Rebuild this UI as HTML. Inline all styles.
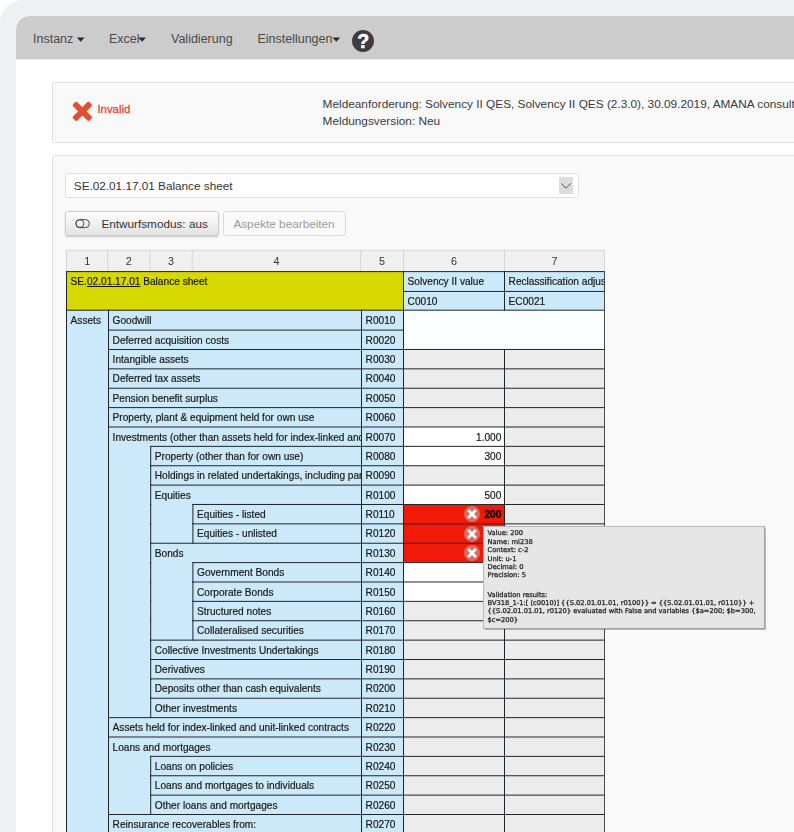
<!DOCTYPE html>
<html lang="de"><head><meta charset="utf-8"><title>Solvency II QES – Balance sheet</title>
<style>
html,body{margin:0;padding:0;}
body{width:794px;height:832px;overflow:hidden;background:#fff;position:relative;font-family:"Liberation Sans",Arial,sans-serif;color:#333;}
.frame{position:absolute;left:0;top:0;width:840px;height:880px;background:#eff0f2;border-top-left-radius:23px;}
.screen{position:absolute;left:16px;top:16px;width:820px;height:860px;background:#fff;border-top-left-radius:14px;overflow:hidden;}
.nav{position:absolute;left:0;top:0;width:820px;height:44px;background:linear-gradient(#cccccc 43px,#ebebeb 43px);}
.nav span{position:absolute;top:14.7px;font-size:12.5px;line-height:16px;color:#4a4a4a;white-space:nowrap;}
.caret{position:absolute;width:7.8px;height:4.3px;background:#2a2a2a;clip-path:polygon(0 0,100% 0,50% 100%);}
.panel{position:absolute;background:#f9f9f9;border:1px solid #e2e2e2;border-radius:3px;box-sizing:border-box;}
.abs{position:absolute;}
.b{position:absolute;}
.tw{position:absolute;left:0;top:0;width:794px;height:832px;will-change:transform;}
.t{position:absolute;font-size:10.15px;line-height:12px;color:#161616;-webkit-text-stroke:0.18px #161616;white-space:nowrap;}
.ch{position:absolute;font-size:10.8px;color:#333;text-align:center;}
.btn{position:absolute;box-sizing:border-box;border:1px solid #cccccc;border-radius:3px;background:linear-gradient(#ffffff,#e2e2e2);box-shadow:0 1px 1.5px rgba(0,0,0,.22);font-size:11.75px;color:#333;white-space:nowrap;}
.tip{position:absolute;left:483px;top:526px;width:282px;height:103px;box-sizing:border-box;background:#e6e6e6;border:1px solid #b9b9b9;border-right-color:#a2a2a2;border-bottom-color:#a2a2a2;box-shadow:0.5px 0.5px 1px rgba(0,0,0,.25);font-family:"DejaVu Sans",Verdana,sans-serif;font-size:6.7px;line-height:8.41px;color:#2a2a2a;-webkit-text-stroke:0.3px #2a2a2a;padding:2.4px 0 0 3.5px;white-space:nowrap;}
</style></head><body>
<div class="frame"></div>
<div class="screen">
<div class="nav">
<span style="left:17px">Instanz</span><i class="caret" style="left:60.8px;top:21.4px"></i>
<span style="left:93px">Excel</span><i class="caret" style="left:122.2px;top:21.4px"></i>
<span style="left:155px">Validierung</span>
<span style="left:241.4px">Einstellungen</span><i class="caret" style="left:316.4px;top:21.4px"></i>
<svg class="abs" style="left:336px;top:14.2px" width="22" height="22" viewBox="0 0 22 22"><circle cx="11" cy="11" r="11" fill="#3e3e3e"/><text x="11.2" y="17.9" text-anchor="middle" font-family="Liberation Sans, Arial, sans-serif" font-weight="bold" font-size="19.5" fill="#fff" stroke="#fff" stroke-width="0.5">?</text></svg>
</div>
</div>
<div class="panel" style="left:52px;top:82px;width:800px;height:61px"></div>
<svg class="abs" style="left:70.6px;top:99.9px" width="22.7" height="22.7" viewBox="0 0 21 21"><path d="M5 5 L16 16 M16 5 L5 16" stroke="#df4f30" stroke-width="5.2" stroke-linecap="square"/><path d="M4.6 4.6 L16.4 16.4 M16.4 4.6 L4.6 16.4" stroke="#df4f30" stroke-width="5.6" stroke-linecap="round" opacity=".5"/></svg>
<div class="abs" style="left:97.4px;top:102px;font-size:11.4px;line-height:14px;color:#dd4b39;-webkit-text-stroke:0.3px #dd4b39">Invalid</div>
<div class="abs" style="left:322.6px;top:96.2px;font-size:11.82px;line-height:16.7px;color:#3a3a3a;white-space:nowrap">Meldeanforderung: Solvency II QES, Solvency II QES (2.3.0), 30.09.2019, AMANA consulting GmbH<br>Meldungsversion: Neu</div>
<div class="panel" style="left:52px;top:155px;width:800px;height:760px"></div>
<div class="abs" style="left:65px;top:173px;width:514px;height:25px;box-sizing:border-box;border:1px solid #e1e1e1;border-radius:3.5px;background:#fff;font-size:11.75px;line-height:23.8px;color:#333;padding-left:7.8px;white-space:nowrap">SE.02.01.17.01 Balance sheet</div>
<div class="abs" style="left:559px;top:177px;width:14px;height:16.7px;background:#dddddd"></div>
<svg class="abs" style="left:559px;top:177px" width="14" height="17" viewBox="0 0 14 17"><path d="M2.4 6.6 L7.05 11.1 L11.8 6.5" fill="none" stroke="#555" stroke-width="1"/></svg>
<div class="btn" style="left:65px;top:211px;width:154px;height:25px;line-height:23px"><svg class="abs" style="left:9.1px;top:6.8px" width="16" height="10" viewBox="0 0 16 10"><rect x="0.9" y="0.6" width="13.5" height="8" rx="4" fill="none" stroke="#3a3a3a" stroke-width="0.9"/><circle cx="4.9" cy="4.6" r="4" fill="none" stroke="#3a3a3a" stroke-width="0.9"/></svg><span class="abs" style="left:35.4px;top:0">Entwurfsmodus: aus</span></div>
<div class="btn" style="left:223px;top:211px;width:122.6px;height:25px;line-height:23px;background:#fafafa;color:#9a9a9a;border-color:#d9d9d9;box-shadow:none"><span class="abs" style="left:9.4px;top:0">Aspekte bearbeiten</span></div>
<div class="tw"><svg class="b" style="left:0;top:0" width="794" height="832" viewBox="0 0 794 832"><rect x="66.50" y="250.40" width="538.00" height="21.20" fill="#f0f0f0"/><rect x="66.00" y="249.90" width="539.00" height="1" fill="#d6d6d6"/><rect x="66.00" y="249.90" width="1" height="22.20" fill="#d6d6d6"/><rect x="107.30" y="249.90" width="1" height="22.20" fill="#d6d6d6"/><rect x="149.40" y="249.90" width="1" height="22.20" fill="#d6d6d6"/><rect x="191.70" y="249.90" width="1" height="22.20" fill="#d6d6d6"/><rect x="360.10" y="249.90" width="1" height="22.20" fill="#d6d6d6"/><rect x="403.00" y="249.90" width="1" height="22.20" fill="#d6d6d6"/><rect x="504.00" y="249.90" width="1" height="22.20" fill="#d6d6d6"/><rect x="604.00" y="249.90" width="1" height="22.20" fill="#d6d6d6"/><rect x="66.50" y="271.60" width="337.00" height="38.60" fill="#d6d800"/><rect x="403.50" y="271.60" width="201.00" height="38.60" fill="#cbe9f8"/><rect x="66.50" y="310.20" width="337.00" height="529.80" fill="#cbe9f8"/><rect x="403.50" y="310.20" width="201.00" height="19.90" fill="#fbfeff"/><rect x="403.50" y="330.10" width="201.00" height="19.38" fill="#fbfeff"/><rect x="403.50" y="349.48" width="101.00" height="19.38" fill="#ececec"/><rect x="504.50" y="349.48" width="100.00" height="19.38" fill="#ececec"/><rect x="403.50" y="368.85" width="101.00" height="19.38" fill="#ececec"/><rect x="504.50" y="368.85" width="100.00" height="19.38" fill="#ececec"/><rect x="403.50" y="388.23" width="101.00" height="19.38" fill="#ececec"/><rect x="504.50" y="388.23" width="100.00" height="19.38" fill="#ececec"/><rect x="403.50" y="407.60" width="101.00" height="19.38" fill="#ececec"/><rect x="504.50" y="407.60" width="100.00" height="19.38" fill="#ececec"/><rect x="403.50" y="426.98" width="101.00" height="19.38" fill="#ffffff"/><rect x="504.50" y="426.98" width="100.00" height="19.38" fill="#ececec"/><rect x="403.50" y="446.36" width="101.00" height="19.38" fill="#ffffff"/><rect x="504.50" y="446.36" width="100.00" height="19.38" fill="#ececec"/><rect x="403.50" y="465.73" width="101.00" height="19.38" fill="#ececec"/><rect x="504.50" y="465.73" width="100.00" height="19.38" fill="#ececec"/><rect x="403.50" y="485.11" width="101.00" height="19.38" fill="#ffffff"/><rect x="504.50" y="485.11" width="100.00" height="19.38" fill="#ececec"/><rect x="403.50" y="504.48" width="101.00" height="19.38" fill="#f11a08"/><rect x="504.50" y="504.48" width="100.00" height="19.38" fill="#ececec"/><rect x="403.50" y="523.86" width="101.00" height="19.38" fill="#f11a08"/><rect x="504.50" y="523.86" width="100.00" height="19.38" fill="#ececec"/><rect x="403.50" y="543.24" width="101.00" height="19.38" fill="#f11a08"/><rect x="504.50" y="543.24" width="100.00" height="19.38" fill="#ececec"/><rect x="403.50" y="562.61" width="101.00" height="19.38" fill="#ffffff"/><rect x="504.50" y="562.61" width="100.00" height="19.38" fill="#ececec"/><rect x="403.50" y="581.99" width="101.00" height="19.38" fill="#ffffff"/><rect x="504.50" y="581.99" width="100.00" height="19.38" fill="#ececec"/><rect x="403.50" y="601.36" width="101.00" height="19.38" fill="#ececec"/><rect x="504.50" y="601.36" width="100.00" height="19.38" fill="#ececec"/><rect x="403.50" y="620.74" width="101.00" height="19.38" fill="#ececec"/><rect x="504.50" y="620.74" width="100.00" height="19.38" fill="#ececec"/><rect x="403.50" y="640.12" width="101.00" height="19.38" fill="#ececec"/><rect x="504.50" y="640.12" width="100.00" height="19.38" fill="#ececec"/><rect x="403.50" y="659.49" width="101.00" height="19.38" fill="#ececec"/><rect x="504.50" y="659.49" width="100.00" height="19.38" fill="#ececec"/><rect x="403.50" y="678.87" width="101.00" height="19.38" fill="#ececec"/><rect x="504.50" y="678.87" width="100.00" height="19.38" fill="#ececec"/><rect x="403.50" y="698.24" width="101.00" height="19.38" fill="#ececec"/><rect x="504.50" y="698.24" width="100.00" height="19.38" fill="#ececec"/><rect x="403.50" y="717.62" width="101.00" height="19.38" fill="#ececec"/><rect x="504.50" y="717.62" width="100.00" height="19.38" fill="#ececec"/><rect x="403.50" y="737.00" width="101.00" height="19.38" fill="#ececec"/><rect x="504.50" y="737.00" width="100.00" height="19.38" fill="#ececec"/><rect x="403.50" y="756.37" width="101.00" height="19.38" fill="#ececec"/><rect x="504.50" y="756.37" width="100.00" height="19.38" fill="#ececec"/><rect x="403.50" y="775.75" width="101.00" height="19.38" fill="#ececec"/><rect x="504.50" y="775.75" width="100.00" height="19.38" fill="#ececec"/><rect x="403.50" y="795.12" width="101.00" height="19.38" fill="#ececec"/><rect x="504.50" y="795.12" width="100.00" height="19.38" fill="#ececec"/><rect x="403.50" y="814.50" width="101.00" height="19.38" fill="#ececec"/><rect x="504.50" y="814.50" width="100.00" height="19.38" fill="#ececec"/><rect x="66.00" y="271.10" width="539.00" height="1.0" fill="#20252a"/><rect x="403.00" y="290.95" width="202.00" height="1.0" fill="#20252a"/><rect x="66.00" y="309.70" width="539.00" height="1.0" fill="#20252a"/><rect x="108.00" y="329.60" width="296.00" height="1.0" fill="#20252a"/><rect x="108.00" y="348.98" width="296.00" height="1.0" fill="#20252a"/><rect x="403.00" y="348.98" width="202.00" height="1.0" fill="#20252a"/><rect x="108.00" y="368.35" width="296.00" height="1.0" fill="#20252a"/><rect x="403.00" y="368.35" width="202.00" height="1.0" fill="#20252a"/><rect x="108.00" y="387.73" width="296.00" height="1.0" fill="#20252a"/><rect x="403.00" y="387.73" width="202.00" height="1.0" fill="#20252a"/><rect x="108.00" y="407.10" width="296.00" height="1.0" fill="#20252a"/><rect x="403.00" y="407.10" width="202.00" height="1.0" fill="#20252a"/><rect x="108.00" y="426.48" width="296.00" height="1.0" fill="#20252a"/><rect x="403.00" y="426.48" width="202.00" height="1.0" fill="#20252a"/><rect x="150.20" y="445.86" width="253.80" height="1.0" fill="#20252a"/><rect x="403.00" y="445.86" width="202.00" height="1.0" fill="#20252a"/><rect x="150.20" y="465.23" width="253.80" height="1.0" fill="#20252a"/><rect x="403.00" y="465.23" width="202.00" height="1.0" fill="#20252a"/><rect x="150.20" y="484.61" width="253.80" height="1.0" fill="#20252a"/><rect x="403.00" y="484.61" width="202.00" height="1.0" fill="#20252a"/><rect x="192.40" y="503.98" width="211.60" height="1.0" fill="#20252a"/><rect x="403.00" y="503.98" width="202.00" height="1.0" fill="#20252a"/><rect x="192.40" y="523.36" width="211.60" height="1.0" fill="#20252a"/><rect x="403.00" y="523.36" width="202.00" height="1.0" fill="#20252a"/><rect x="150.20" y="542.74" width="253.80" height="1.0" fill="#20252a"/><rect x="403.00" y="542.74" width="202.00" height="1.0" fill="#20252a"/><rect x="192.40" y="562.11" width="211.60" height="1.0" fill="#20252a"/><rect x="403.00" y="562.11" width="202.00" height="1.0" fill="#20252a"/><rect x="192.40" y="581.49" width="211.60" height="1.0" fill="#20252a"/><rect x="403.00" y="581.49" width="202.00" height="1.0" fill="#20252a"/><rect x="192.40" y="600.86" width="211.60" height="1.0" fill="#20252a"/><rect x="403.00" y="600.86" width="202.00" height="1.0" fill="#20252a"/><rect x="192.40" y="620.24" width="211.60" height="1.0" fill="#20252a"/><rect x="403.00" y="620.24" width="202.00" height="1.0" fill="#20252a"/><rect x="150.20" y="639.62" width="253.80" height="1.0" fill="#20252a"/><rect x="403.00" y="639.62" width="202.00" height="1.0" fill="#20252a"/><rect x="150.20" y="658.99" width="253.80" height="1.0" fill="#20252a"/><rect x="403.00" y="658.99" width="202.00" height="1.0" fill="#20252a"/><rect x="150.20" y="678.37" width="253.80" height="1.0" fill="#20252a"/><rect x="403.00" y="678.37" width="202.00" height="1.0" fill="#20252a"/><rect x="150.20" y="697.74" width="253.80" height="1.0" fill="#20252a"/><rect x="403.00" y="697.74" width="202.00" height="1.0" fill="#20252a"/><rect x="108.00" y="717.12" width="296.00" height="1.0" fill="#20252a"/><rect x="403.00" y="717.12" width="202.00" height="1.0" fill="#20252a"/><rect x="108.00" y="736.50" width="296.00" height="1.0" fill="#20252a"/><rect x="403.00" y="736.50" width="202.00" height="1.0" fill="#20252a"/><rect x="150.20" y="755.87" width="253.80" height="1.0" fill="#20252a"/><rect x="403.00" y="755.87" width="202.00" height="1.0" fill="#20252a"/><rect x="150.20" y="775.25" width="253.80" height="1.0" fill="#20252a"/><rect x="403.00" y="775.25" width="202.00" height="1.0" fill="#20252a"/><rect x="150.20" y="794.62" width="253.80" height="1.0" fill="#20252a"/><rect x="403.00" y="794.62" width="202.00" height="1.0" fill="#20252a"/><rect x="108.00" y="814.00" width="296.00" height="1.0" fill="#20252a"/><rect x="403.00" y="814.00" width="202.00" height="1.0" fill="#20252a"/><rect x="66.00" y="271.10" width="1.0" height="569.40" fill="#20252a"/><rect x="108.00" y="309.70" width="1.0" height="530.80" fill="#20252a"/><rect x="361.00" y="309.70" width="1.0" height="530.80" fill="#20252a"/><rect x="403.00" y="271.10" width="1.0" height="569.40" fill="#20252a"/><rect x="504.00" y="271.10" width="1.0" height="39.60" fill="#20252a"/><rect x="504.00" y="348.98" width="1.0" height="491.52" fill="#20252a"/><rect x="604.00" y="271.10" width="1.0" height="569.40" fill="#4a4a4a"/><rect x="150.20" y="445.86" width="1.0" height="20.38" fill="#20252a"/><rect x="150.20" y="465.23" width="1.0" height="20.38" fill="#20252a"/><rect x="150.20" y="484.61" width="1.0" height="20.38" fill="#20252a"/><rect x="150.20" y="503.98" width="1.0" height="20.38" fill="#20252a"/><rect x="192.40" y="503.98" width="1.0" height="20.38" fill="#20252a"/><rect x="150.20" y="523.36" width="1.0" height="20.38" fill="#20252a"/><rect x="192.40" y="523.36" width="1.0" height="20.38" fill="#20252a"/><rect x="150.20" y="542.74" width="1.0" height="20.38" fill="#20252a"/><rect x="150.20" y="562.11" width="1.0" height="20.38" fill="#20252a"/><rect x="192.40" y="562.11" width="1.0" height="20.38" fill="#20252a"/><rect x="150.20" y="581.49" width="1.0" height="20.38" fill="#20252a"/><rect x="192.40" y="581.49" width="1.0" height="20.38" fill="#20252a"/><rect x="150.20" y="600.86" width="1.0" height="20.38" fill="#20252a"/><rect x="192.40" y="600.86" width="1.0" height="20.38" fill="#20252a"/><rect x="150.20" y="620.24" width="1.0" height="20.38" fill="#20252a"/><rect x="192.40" y="620.24" width="1.0" height="20.38" fill="#20252a"/><rect x="150.20" y="639.62" width="1.0" height="20.38" fill="#20252a"/><rect x="150.20" y="658.99" width="1.0" height="20.38" fill="#20252a"/><rect x="150.20" y="678.37" width="1.0" height="20.38" fill="#20252a"/><rect x="150.20" y="697.74" width="1.0" height="20.38" fill="#20252a"/><rect x="150.20" y="755.87" width="1.0" height="20.38" fill="#20252a"/><rect x="150.20" y="775.25" width="1.0" height="20.38" fill="#20252a"/><rect x="150.20" y="794.62" width="1.0" height="20.38" fill="#20252a"/></svg>
<div class="ch" style="left:66.50px;top:250.40px;width:41.30px;height:21.20px;line-height:22.60px">1</div>
<div class="ch" style="left:107.80px;top:250.40px;width:42.10px;height:21.20px;line-height:22.60px">2</div>
<div class="ch" style="left:149.90px;top:250.40px;width:42.30px;height:21.20px;line-height:22.60px">3</div>
<div class="ch" style="left:192.20px;top:250.40px;width:168.40px;height:21.20px;line-height:22.60px">4</div>
<div class="ch" style="left:360.60px;top:250.40px;width:42.90px;height:21.20px;line-height:22.60px">5</div>
<div class="ch" style="left:403.50px;top:250.40px;width:101.00px;height:21.20px;line-height:22.60px">6</div>
<div class="ch" style="left:504.50px;top:250.40px;width:100.00px;height:21.20px;line-height:22.60px">7</div>
<div class="t" style="left:70.60px;top:276.20px;">SE.<u>02.01.17.01</u> Balance sheet</div>
<div class="t" style="left:407.60px;top:276.20px;">Solvency II value</div>
<div class="t" style="left:508.60px;top:276.20px;width:95.50px;overflow:hidden">Reclassification adjustments</div>
<div class="t" style="left:407.60px;top:296.05px;">C0010</div>
<div class="t" style="left:508.60px;top:296.05px;">EC0021</div>
<div class="t" style="left:70.60px;top:314.80px;">Assets</div>
<div class="t" style="left:112.60px;top:314.80px;width:248.50px;overflow:hidden">Goodwill</div>
<div class="t" style="left:365.60px;top:314.80px;">R0010</div>
<div class="t" style="left:112.60px;top:334.70px;width:248.50px;overflow:hidden">Deferred acquisition costs</div>
<div class="t" style="left:365.60px;top:334.70px;">R0020</div>
<div class="t" style="left:112.60px;top:354.08px;width:248.50px;overflow:hidden">Intangible assets</div>
<div class="t" style="left:365.60px;top:354.08px;">R0030</div>
<div class="t" style="left:112.60px;top:373.45px;width:248.50px;overflow:hidden">Deferred tax assets</div>
<div class="t" style="left:365.60px;top:373.45px;">R0040</div>
<div class="t" style="left:112.60px;top:392.83px;width:248.50px;overflow:hidden">Pension benefit surplus</div>
<div class="t" style="left:365.60px;top:392.83px;">R0050</div>
<div class="t" style="left:112.60px;top:412.20px;width:248.50px;overflow:hidden">Property, plant &amp; equipment held for own use</div>
<div class="t" style="left:365.60px;top:412.20px;">R0060</div>
<div class="t" style="left:112.60px;top:431.58px;width:248.50px;overflow:hidden">Investments (other than assets held for index-linked and unit-linked contracts)</div>
<div class="t" style="left:365.60px;top:431.58px;">R0070</div>
<div class="t" style="left:403.50px;top:431.58px;width:97.90px;text-align:right">1.000</div>
<div class="t" style="left:154.80px;top:450.96px;width:206.30px;overflow:hidden">Property (other than for own use)</div>
<div class="t" style="left:365.60px;top:450.96px;">R0080</div>
<div class="t" style="left:403.50px;top:450.96px;width:97.90px;text-align:right">300</div>
<div class="t" style="left:154.80px;top:470.33px;width:206.30px;overflow:hidden">Holdings in related undertakings, including participations</div>
<div class="t" style="left:365.60px;top:470.33px;">R0090</div>
<div class="t" style="left:154.80px;top:489.71px;width:206.30px;overflow:hidden">Equities</div>
<div class="t" style="left:365.60px;top:489.71px;">R0100</div>
<div class="t" style="left:403.50px;top:489.71px;width:97.90px;text-align:right">500</div>
<div class="t" style="left:197.00px;top:509.08px;width:164.10px;overflow:hidden">Equities - listed</div>
<div class="t" style="left:365.60px;top:509.08px;">R0110</div>
<div class="t" style="left:197.00px;top:528.46px;width:164.10px;overflow:hidden">Equities - unlisted</div>
<div class="t" style="left:365.60px;top:528.46px;">R0120</div>
<div class="t" style="left:154.80px;top:547.84px;width:206.30px;overflow:hidden">Bonds</div>
<div class="t" style="left:365.60px;top:547.84px;">R0130</div>
<div class="t" style="left:197.00px;top:567.21px;width:164.10px;overflow:hidden">Government Bonds</div>
<div class="t" style="left:365.60px;top:567.21px;">R0140</div>
<div class="t" style="left:197.00px;top:586.59px;width:164.10px;overflow:hidden">Corporate Bonds</div>
<div class="t" style="left:365.60px;top:586.59px;">R0150</div>
<div class="t" style="left:197.00px;top:605.96px;width:164.10px;overflow:hidden">Structured notes</div>
<div class="t" style="left:365.60px;top:605.96px;">R0160</div>
<div class="t" style="left:197.00px;top:625.34px;width:164.10px;overflow:hidden">Collateralised securities</div>
<div class="t" style="left:365.60px;top:625.34px;">R0170</div>
<div class="t" style="left:154.80px;top:644.72px;width:206.30px;overflow:hidden">Collective Investments Undertakings</div>
<div class="t" style="left:365.60px;top:644.72px;">R0180</div>
<div class="t" style="left:154.80px;top:664.09px;width:206.30px;overflow:hidden">Derivatives</div>
<div class="t" style="left:365.60px;top:664.09px;">R0190</div>
<div class="t" style="left:154.80px;top:683.47px;width:206.30px;overflow:hidden">Deposits other than cash equivalents</div>
<div class="t" style="left:365.60px;top:683.47px;">R0200</div>
<div class="t" style="left:154.80px;top:702.84px;width:206.30px;overflow:hidden">Other investments</div>
<div class="t" style="left:365.60px;top:702.84px;">R0210</div>
<div class="t" style="left:112.60px;top:722.22px;width:248.50px;overflow:hidden">Assets held for index-linked and unit-linked contracts</div>
<div class="t" style="left:365.60px;top:722.22px;">R0220</div>
<div class="t" style="left:112.60px;top:741.60px;width:248.50px;overflow:hidden">Loans and mortgages</div>
<div class="t" style="left:365.60px;top:741.60px;">R0230</div>
<div class="t" style="left:154.80px;top:760.97px;width:206.30px;overflow:hidden">Loans on policies</div>
<div class="t" style="left:365.60px;top:760.97px;">R0240</div>
<div class="t" style="left:154.80px;top:780.35px;width:206.30px;overflow:hidden">Loans and mortgages to individuals</div>
<div class="t" style="left:365.60px;top:780.35px;">R0250</div>
<div class="t" style="left:154.80px;top:799.72px;width:206.30px;overflow:hidden">Other loans and mortgages</div>
<div class="t" style="left:365.60px;top:799.72px;">R0260</div>
<div class="t" style="left:112.60px;top:819.10px;width:248.50px;overflow:hidden">Reinsurance recoverables from:</div>
<div class="t" style="left:365.60px;top:819.10px;">R0270</div>
<svg class="b" style="left:463.20px;top:505.17px" width="18" height="18" viewBox="-9 -9 18 18"><circle cx="0" cy="0" r="8" fill="#da6c60"/><path d="M-2.9 -2.9 L2.9 2.9 M2.9 -2.9 L-2.9 2.9" stroke="#fff" stroke-width="2.8" stroke-linecap="square"/></svg>
<svg class="b" style="left:463.20px;top:524.55px" width="18" height="18" viewBox="-9 -9 18 18"><circle cx="0" cy="0" r="8" fill="#da6c60"/><path d="M-2.9 -2.9 L2.9 2.9 M2.9 -2.9 L-2.9 2.9" stroke="#fff" stroke-width="2.8" stroke-linecap="square"/></svg>
<svg class="b" style="left:463.20px;top:543.92px" width="18" height="18" viewBox="-9 -9 18 18"><circle cx="0" cy="0" r="8" fill="#da6c60"/><path d="M-2.9 -2.9 L2.9 2.9 M2.9 -2.9 L-2.9 2.9" stroke="#fff" stroke-width="2.8" stroke-linecap="square"/></svg>
<div class="t" style="left:403.50px;top:509.08px;width:97.90px;text-align:right;font-weight:bold;-webkit-text-stroke:0.3px #000;color:#000">200</div><div class="tip"><div>Value: 200</div><div>Name: mi238</div><div>Context: c-2</div><div>Unit: u-1</div><div>Decimal: 0</div><div>Precision: 5</div><div><span style="display:block;height:10.8px"></span></div><div>Validation results:</div><div>BV318_1-1:[ (c0010)] {{S.02.01.01.01, r0100}} = {{S.02.01.01.01, r0110}} +</div><div>{{S.02.01.01.01, r0120} evaluated with False and variables {$a=200; $b=300,</div><div>$c=200}</div></div></div>
</body></html>
